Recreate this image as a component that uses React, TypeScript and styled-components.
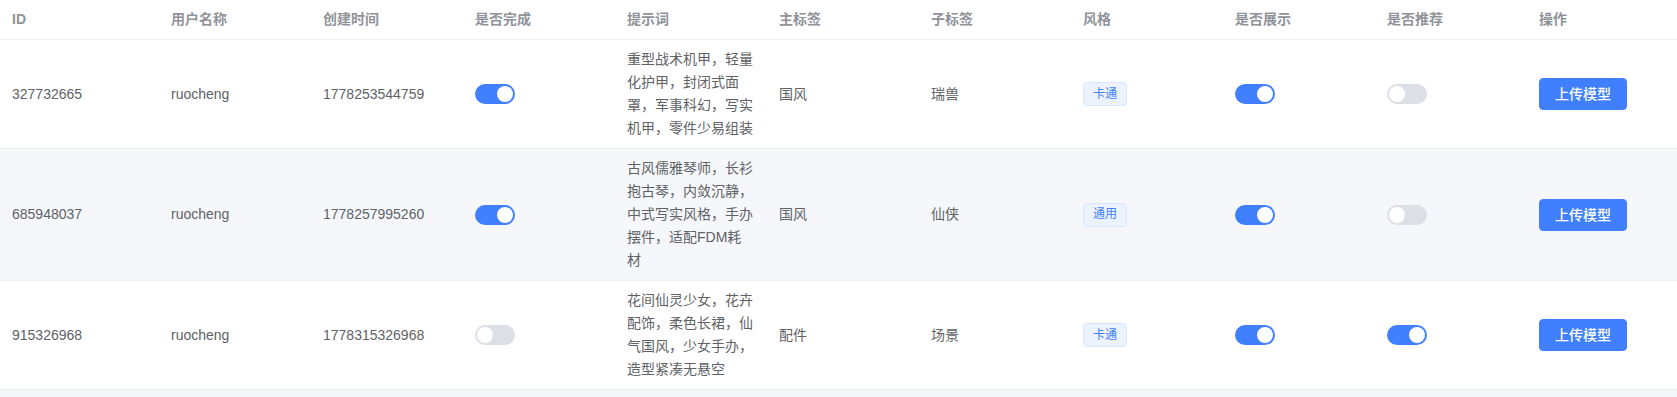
import styled, { createGlobalStyle } from "styled-components";

//#region  styled css

const GlobalStyle = createGlobalStyle`
    html, body {
        margin: 0;
        padding: 0;
        background: #ffffff;
    }
    body {
        font-family: "Liberation Sans", "Noto Sans CJK SC", sans-serif;
        font-size: 14px;
        color: #606266;
        overflow: hidden;
    }
`;

const TableWrapper = styled.div`
    width: 100%;
    height: 100vh;
    overflow: hidden;
    background: #ffffff;
`;

const Row = styled.div<{ $striped?: boolean }>`
    display: grid;
    grid-template-columns: 159px repeat(9, 152px) 1fr;
    border-bottom: 1px solid #ebeef5;
    background: ${(p) => (p.$striped ? "#f5f7fa" : "#ffffff")};
`;

const StubRow = styled(Row)`
    height: 40px;
    border-bottom: none;
`;

const HeadCell = styled.div`
    padding: 8px 12px;
    line-height: 23px;
    color: #909399;
    font-weight: 600;
    white-space: nowrap;
`;

const Cell = styled.div`
    padding: 8px 12px;
    line-height: 23px;
    display: flex;
    align-items: center;
    color: #606266;
`;

const PromptText = styled.div`
    width: 127px;
    word-break: break-all;
`;

const Switch = styled.span<{ $on?: boolean }>`
    box-sizing: border-box;
    width: 40px;
    height: 20px;
    border-radius: 10px;
    border: 2px solid ${(p) => (p.$on ? "#4080ff" : "#dcdfe6")};
    background: ${(p) => (p.$on ? "#4080ff" : "#dcdfe6")};
    display: flex;
    justify-content: ${(p) => (p.$on ? "flex-end" : "flex-start")};
    cursor: pointer;
    &::after {
        content: "";
        width: 16px;
        height: 16px;
        border-radius: 50%;
        background: #ffffff;
    }
`;

const Tag = styled.span`
    box-sizing: border-box;
    height: 24px;
    padding: 0 9px;
    display: inline-flex;
    align-items: center;
    font-size: 12px;
    color: #4080ff;
    background: #ecf2ff;
    border: 1px solid #d9e6ff;
    border-radius: 4px;
`;

const UploadBtn = styled.button`
    box-sizing: border-box;
    height: 32px;
    padding: 8px 15px;
    font-family: "Liberation Sans", "Noto Sans CJK SC", sans-serif;
    font-size: 14px;
    font-weight: 500;
    line-height: 1;
    color: #ffffff;
    background: #4080ff;
    border: 1px solid #4080ff;
    border-radius: 4px;
    cursor: pointer;
`;
//#endregion

const headers = ["ID", "用户名称", "创建时间", "是否完成", "提示词", "主标签", "子标签", "风格", "是否展示", "是否推荐", "操作"];

const rows = [
    {
        id: "327732665",
        user: "ruocheng",
        time: "1778253544759",
        done: true,
        prompt: "重型战术机甲，轻量化护甲，封闭式面罩，军事科幻，写实机甲，零件少易组装",
        main: "国风",
        sub: "瑞兽",
        style: "卡通",
        show: true,
        recommend: false,
    },
    {
        id: "685948037",
        user: "ruocheng",
        time: "1778257995260",
        done: true,
        prompt: "古风儒雅琴师，长衫抱古琴，内敛沉静，中式写实风格，手办摆件，适配FDM耗材",
        main: "国风",
        sub: "仙侠",
        style: "通用",
        show: true,
        recommend: false,
    },
    {
        id: "915326968",
        user: "ruocheng",
        time: "1778315326968",
        done: false,
        prompt: "花间仙灵少女，花卉配饰，柔色长裙，仙气国风，少女手办，造型紧凑无悬空",
        main: "配件",
        sub: "场景",
        style: "卡通",
        show: true,
        recommend: true,
    },
];

const App = () => {
    return (
        <>
            <GlobalStyle />
            <TableWrapper>
                <Row>
                    {headers.map((h) => (
                        <HeadCell key={h}>{h}</HeadCell>
                    ))}
                </Row>
                {rows.map((r, i) => (
                    <Row key={r.id} $striped={i % 2 === 1}>
                        <Cell>{r.id}</Cell>
                        <Cell>{r.user}</Cell>
                        <Cell>{r.time}</Cell>
                        <Cell>
                            <Switch $on={r.done} />
                        </Cell>
                        <Cell>
                            <PromptText>{r.prompt}</PromptText>
                        </Cell>
                        <Cell>{r.main}</Cell>
                        <Cell>{r.sub}</Cell>
                        <Cell>
                            <Tag>{r.style}</Tag>
                        </Cell>
                        <Cell>
                            <Switch $on={r.show} />
                        </Cell>
                        <Cell>
                            <Switch $on={r.recommend} />
                        </Cell>
                        <Cell>
                            <UploadBtn>上传模型</UploadBtn>
                        </Cell>
                    </Row>
                ))}
                <StubRow $striped />
            </TableWrapper>
        </>
    );
};

export default App;
